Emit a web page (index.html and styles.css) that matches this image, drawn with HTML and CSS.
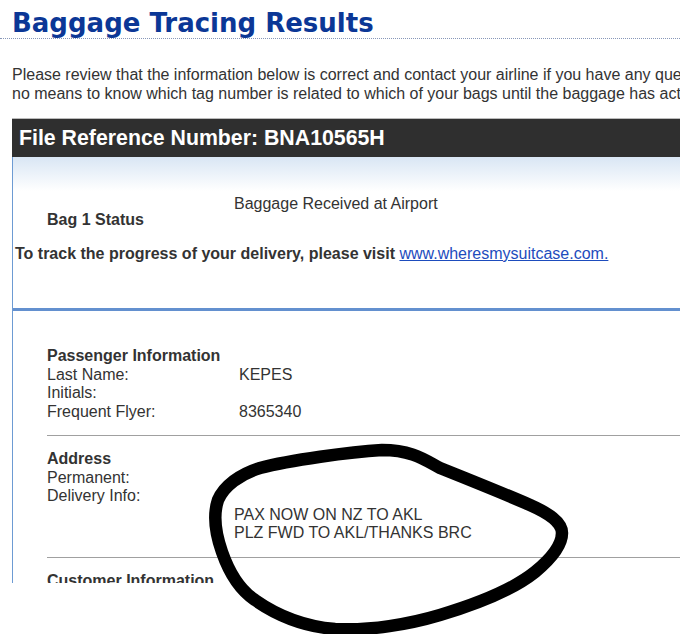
FILE: index.html
```html
<!DOCTYPE html>
<html>
<head>
<meta charset="utf-8">
<link rel="stylesheet" href="styles.css">
</head>
<body>
<div class="page">
  <h1 class="title">Baggage Tracing Results</h1>
  <p class="intro">
    <span class="line">Please review that the information below is correct and contact your airline if you have any questions. Please note that the airline has</span>
    <span class="line">no means to know which tag number is related to which of your bags until the baggage has actually been located.</span>
  </p>
  <div class="file-bar">File Reference Number: BNA10565H</div>
  <div class="panel">
    <div class="status">
      <div class="status-row">
        <div class="status-label">Bag 1 Status</div>
        <div class="status-value">Baggage Received at Airport</div>
      </div>
      <p class="track">To track the progress of your delivery, please visit <a href="#">www.wheresmysuitcase.com.</a></p>
    </div>
    <div class="details">
      <section class="group">
        <h2 class="group-title">Passenger Information</h2>
        <div class="row"><span class="label">Last Name:</span><span class="value">KEPES</span></div>
        <div class="row"><span class="label">Initials:</span><span class="value"></span></div>
        <div class="row"><span class="label">Frequent Flyer:</span><span class="value">8365340</span></div>
      </section>
      <section class="group">
        <h2 class="group-title">Address</h2>
        <div class="row"><span class="label">Permanent:</span><span class="value"></span></div>
        <div class="row"><span class="label">Delivery Info:</span><span class="value"></span></div>
        <div class="row"><span class="label"></span><span class="value note">PAX NOW ON NZ TO AKL<br>PLZ FWD TO AKL/THANKS BRC</span></div>
      </section>
      <section class="group last">
        <h2 class="group-title">Customer Information</h2>
      </section>
    </div>
  </div>
</div>
<svg class="scribble" width="680" height="634" viewBox="0 0 680 634">
  <path d="M 382 450 C 350 452, 290 460, 260 468 C 240 474, 224 486, 218 500 C 213 515, 216 535, 222 552 C 230 575, 240 590, 255 600 C 275 614, 300 626, 335 629 C 370 631, 410 624, 440 615 C 480 603, 515 588, 535 572 C 552 558, 562 545, 562 533 C 562 522, 548 513, 530 505 C 505 494, 470 480, 440 468 C 425 460, 412 450, 382 450 Z" fill="none" stroke="#000" stroke-width="12.5" stroke-linejoin="round" stroke-linecap="round"/>
</svg>
</body>
</html>
```
FILE: styles.css
```css
html, body {
  margin: 0;
  padding: 0;
  overflow: hidden;
  background: #fff;
}
body {
  width: 680px;
  height: 634px;
  position: relative;
  font-family: "Liberation Sans", Arial, sans-serif;
  color: #333;
}
.page {
  width: 1000px;
  height: 583px;
  overflow: hidden;
}
.title {
  margin: 0;
  padding: 8px 0 0 12px;
  font-family: "DejaVu Sans", Verdana, sans-serif;
  font-weight: bold;
  font-size: 26px;
  line-height: 30px;
  color: #0b3796;
  border-bottom: 1px dotted #8797b8;
}
.intro {
  margin: 26px 0 0 12px;
  font-size: 16px;
  line-height: 19px;
}
.intro .line {
  display: block;
  white-space: nowrap;
}
.file-bar {
  margin: 15px 0 0 12px;
  height: 38px;
  line-height: 39px;
  background: #2f2f2f;
  border-top: 1px solid #bbb;
  color: #fff;
  font-weight: bold;
  font-size: 21.3px;
  padding-left: 7px;
}
.panel {
  margin-left: 12px;
  border-left: 1px solid #6d9bd3;
}
.status {
  box-sizing: border-box;
  background: linear-gradient(#d9e6f4 0, #ffffff 34px);
  padding-top: 38px;
  height: 154px;
  border-bottom: 3px solid #6390cf;
  font-size: 16px;
}
.status-row {
  display: flex;
}
.status-label {
  font-weight: bold;
  padding: 16px 0 0 34px;
  width: 187px;
}
.track {
  margin: 16px 0 0 2px;
  font-weight: bold;
}
.track a {
  color: #1d4cbd;
  font-weight: normal;
}
.details {
  padding: 36px 0 0 34px;
}
.group {
  border-bottom: 1px solid #a0a0a0;
  padding-bottom: 14px;
  margin-bottom: 14px;
  font-size: 16px;
  line-height: 18.5px;
}
.group-title {
  margin: 0;
  font-size: 16px;
  font-weight: bold;
  line-height: 18.5px;
}
.row {
  display: flex;
}
.label {
  width: 192px;
  flex: none;
}
.note {
  margin-left: -5px;
}
.scribble {
  position: absolute;
  left: 0;
  top: 0;
}
```
